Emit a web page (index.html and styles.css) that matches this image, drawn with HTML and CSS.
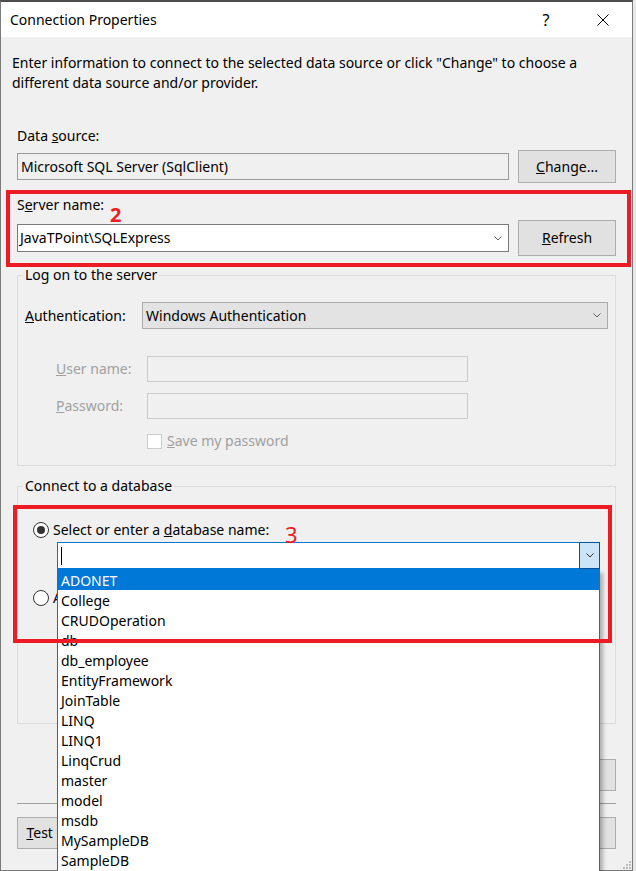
FILE: index.html
```html
<!DOCTYPE html>
<html lang="en">
<head>
<meta charset="utf-8">
<title>Connection Properties</title>
<link rel="stylesheet" href="styles.css">
</head>
<body>
<div class="window">
  <header class="titlebar">
    <span class="title">Connection Properties</span>
    <span class="tb-btn tb-help">?</span>
    <span class="tb-btn tb-close"><svg width="12" height="12" viewBox="0 0 12 12"><path d="M0.5 0.5L11.5 11.5M11.5 0.5L0.5 11.5" fill="none" stroke="#000" stroke-width="1"/></svg></span>
  </header>
  <main class="content">
    <p class="intro">Enter information to connect to the selected data source or click "Change" to choose a<br>different data source and/or provider.</p>

    <div class="label ds-label">Data <u>s</u>ource:</div>
    <div class="row row-ds">
      <div class="field field-readonly">Microsoft SQL Server (SqlClient)</div>
      <button class="btn btn-change" type="button"><u>C</u>hange...</button>
    </div>

    <div class="label server-label">S<u>e</u>rver name:</div>
    <div class="row row-server">
      <div class="field combo">
        <span class="combo-text">JavaTPoint\SQLExpress</span>
        <svg class="chev" width="8" height="5" viewBox="0 0 8 5"><path d="M0.5 0.5L4 4L7.5 0.5" fill="none" stroke="#5f5f5f" stroke-width="1"/></svg>
      </div>
      <button class="btn btn-refresh" type="button"><u>R</u>efresh</button>
    </div>

    <fieldset class="group group-logon">
      <legend>Log on to the server</legend>
      <div class="auth-row">
        <span class="label"><u>A</u>uthentication:</span>
        <div class="field combo combo-auth">
          <span class="combo-text">Windows Authentication</span>
          <svg class="chev" width="8" height="5" viewBox="0 0 8 5"><path d="M0.5 0.5L4 4L7.5 0.5" fill="none" stroke="#5f5f5f" stroke-width="1"/></svg>
        </div>
      </div>
      <div class="cred-grid">
        <span class="label disabled"><u>U</u>ser name:</span>
        <div class="field field-disabled"></div>
        <span class="label disabled"><u>P</u>assword:</span>
        <div class="field field-disabled"></div>
        <span class="cred-spacer"></span>
        <div class="check-row disabled"><span class="checkbox"></span><span><u>S</u>ave my password</span></div>
      </div>
    </fieldset>

    <fieldset class="group group-db">
      <legend>Connect to a database</legend>
      <div class="radio-row"><span class="radio radio-on"></span><span>Select or enter a <u>d</u>atabase name:</span></div>
      <div class="db-combo">
        <span class="db-edit"><span class="caret"></span></span>
        <span class="db-drop"><svg width="8" height="5" viewBox="0 0 8 5"><path d="M0.5 0.5L4 4L7.5 0.5" fill="none" stroke="#333" stroke-width="1"/></svg></span>
        <ul class="db-list">
          <li class="sel">ADONET</li>
          <li>College</li>
          <li>CRUDOperation</li>
          <li>db</li>
          <li>db_employee</li>
          <li>EntityFramework</li>
          <li>JoinTable</li>
          <li>LINQ</li>
          <li>LINQ1</li>
          <li>LinqCrud</li>
          <li>master</li>
          <li>model</li>
          <li>msdb</li>
          <li>MySampleDB</li>
          <li>SampleDB</li>
        </ul>
      </div>
      <div class="radio-row radio-row-2"><span class="radio"></span><span>Attach a database file:</span></div>
    </fieldset>

    <div class="adv-row"><button class="btn btn-adv" type="button">Ad<u>v</u>anced...</button></div>
    <hr class="sep">
    <div class="footer">
      <button class="btn btn-test" type="button"><u>T</u>est Connection</button>
      <span class="footer-gap"></span>
      <button class="btn" type="button">OK</button>
      <button class="btn" type="button">Cancel</button>
    </div>
  </main>

  <div class="mark mark-box mark-box-2"></div>
  <div class="mark mark-num mark-num-2">2</div>
  <div class="mark mark-box mark-box-3"></div>
  <div class="mark mark-num mark-num-3">3</div>
  <svg class="grip" width="9" height="9" viewBox="0 0 9 9"><rect x="6" y="0" width="2" height="2" fill="#bdbdbd"/><rect x="3" y="3" width="2" height="2" fill="#bdbdbd"/><rect x="6" y="3" width="2" height="2" fill="#bdbdbd"/><rect x="0" y="6" width="2" height="2" fill="#bdbdbd"/><rect x="3" y="6" width="2" height="2" fill="#bdbdbd"/><rect x="6" y="6" width="2" height="2" fill="#bdbdbd"/></svg>
</div>
</body>
</html>
```

FILE: styles.css
```css
* { box-sizing: border-box; }

html, body {
  margin: 0;
  padding: 0;
  overflow: hidden;
}

body {
  background: #e9e9e9;
  font-family: "Noto Sans", "Segoe UI", sans-serif;
  font-size: 14px;
  line-height: 20px;
  color: #000;
}

.window {
  position: relative;
  width: 633px;
  height: 871px;
  background: #f0f0f0;
  border: 1px solid #7a7a7a;
  border-top: 2px solid #4d4d4d;
}

/* title bar */
.titlebar {
  height: 35px;
  background: #fff;
  display: flex;
  align-items: center;
  padding: 0 14px 0 9px;
}
.title { flex: 1; }
.tb-btn {
  width: 30px;
  display: flex;
  justify-content: center;
  align-items: center;
}
.tb-help { font-size: 16px; }
.tb-close { margin-left: 27px; }

/* content */
.content {
  padding: 16px 16px 0 16px;
}

.intro {
  margin: 0 0 0 -5px;
}

.label { white-space: nowrap; }
.ds-label { margin-top: 33px; }
.server-label { margin-top: 12px; }

.row {
  display: flex;
  align-items: center;
  gap: 9px;
}
.row-ds { margin-top: 4px; }
.row-server { margin-top: 5px; }

.field {
  flex: 1;
  height: 27px;
  display: flex;
  align-items: center;
  padding: 0 3px;
  border: 1px solid #7a7a7a;
  background: #fff;
}
.field-readonly {
  background: #f0f0f0;
  border-color: #9a9a9a;
}
.combo { height: 28px; padding: 0 6px 0 2px; }
.combo-text { flex: 1; white-space: nowrap; }

.btn {
  width: 98px;
  height: 33px;
  padding: 0;
  font: inherit;
  color: #000;
  background: #e1e1e1;
  border: 1px solid #adadad;
  border-radius: 0;
}
.btn-refresh { height: 36px; }

/* group boxes */
.group {
  margin: 0;
  min-width: 0;
  border: 1px solid #dcdcdc;
}
.group legend {
  padding: 0 2px;
  line-height: 20px;
}
.group-logon {
  margin-top: 9px;
  padding: 17px 7px 14px 7px;
}
.group-logon legend { margin-left: -2px; }

.auth-row {
  display: grid;
  grid-template-columns: 117px 1fr;
  align-items: center;
}
.combo-auth {
  height: 27px;
  background: #e3e3e3;
  border-color: #acacac;
  padding: 0 6px 0 3px;
}

.cred-grid {
  margin: 27px 0 0 31px;
  display: grid;
  grid-template-columns: 91px 321px;
  row-gap: 11px;
  align-items: center;
}
.cred-grid .field { height: 26px; }
.field-disabled {
  background: #f0f0f0;
  border-color: #cccccc;
}
.disabled { color: #a0a0a0; }

.check-row {
  margin-top: 1px;
  display: flex;
  align-items: center;
  gap: 5px;
  height: 20px;
}
.checkbox {
  width: 15px;
  height: 15px;
  background: #fff;
  border: 1px solid #cccccc;
}

.group-db {
  margin-top: 10px;
  padding: 24px 15px 115px 15px;
}
.group-db legend { margin-left: -10px; }

.radio-row {
  display: flex;
  align-items: center;
  gap: 4px;
  height: 20px;
}
.radio-row-2 { margin-top: 19px; }
.radio {
  width: 16px;
  height: 16px;
  border-radius: 50%;
  border: 1px solid #333;
  background: #fff;
  display: flex;
  align-items: center;
  justify-content: center;
}
.radio-on::after {
  content: "";
  width: 8px;
  height: 8px;
  border-radius: 50%;
  background: #333;
}

.db-combo {
  position: relative;
  margin: 2px 0 0 24px;
  width: 543px;
  height: 27px;
  display: flex;
  border: 1px solid #0078d7;
  background: #fff;
}
.db-edit {
  flex: 1;
  display: flex;
  align-items: center;
  padding-left: 3px;
}
.caret {
  width: 1px;
  height: 18px;
  background: #000;
}
.db-drop {
  width: 21px;
  margin: -1px -1px -1px 0;
  background: #cce4f7;
  border: 1px solid #005499;
  display: flex;
  align-items: center;
  justify-content: center;
}

.db-list {
  position: absolute;
  z-index: 10;
  top: 100%;
  left: -1px;
  width: 543px;
  height: 303px;
  margin: 1px 0 0 0;
  padding: 0;
  list-style: none;
  overflow: hidden;
  background: #fff;
  border-left: 1px solid #0078d7;
  border-right: 1px solid #0078d7;
  box-shadow: 3px 4px 4px rgba(0, 0, 0, 0.28);
}
.db-list li {
  height: 20px;
  padding: 2px 0 0 3px;
  line-height: 18px;
  white-space: nowrap;
}
.db-list li.sel {
  height: 21px;
  padding-top: 3px;
  background: #0078d7;
  color: #fff;
}

/* bottom */
.adv-row {
  margin-top: 35px;
  display: flex;
  justify-content: flex-end;
}
.adv-row .btn { height: 32px; }
.btn-adv { padding-right: 14px; }

.sep {
  margin: 12px 0 0 0;
  height: 0;
  border: 0;
  border-top: 1px solid #a0a0a0;
}

.footer {
  margin-top: 13px;
  display: flex;
  gap: 9px;
}
.footer .btn { height: 32px; }
.btn-test { width: 124px; }
.footer-gap { flex: 1; }

/* annotations */
.mark {
  position: absolute;
  z-index: 20;
}
.mark-box { border: 4px solid #ed1c24; }
.mark-box-2 { left: 5px; top: 188px; width: 625px; height: 77px; }
.mark-box-3 { left: 12px; top: 503px; width: 599px; height: 138px; }
.mark-num { color: #ed1c24; }
.mark-num-2 { left: 109px; top: 203px; font-size: 20px; line-height: 20px; font-weight: 700; }
.mark-num-3 { left: 284px; top: 521px; font-size: 22px; line-height: 22px; }

.grip {
  position: absolute;
  right: 0;
  bottom: 0;
}
```
